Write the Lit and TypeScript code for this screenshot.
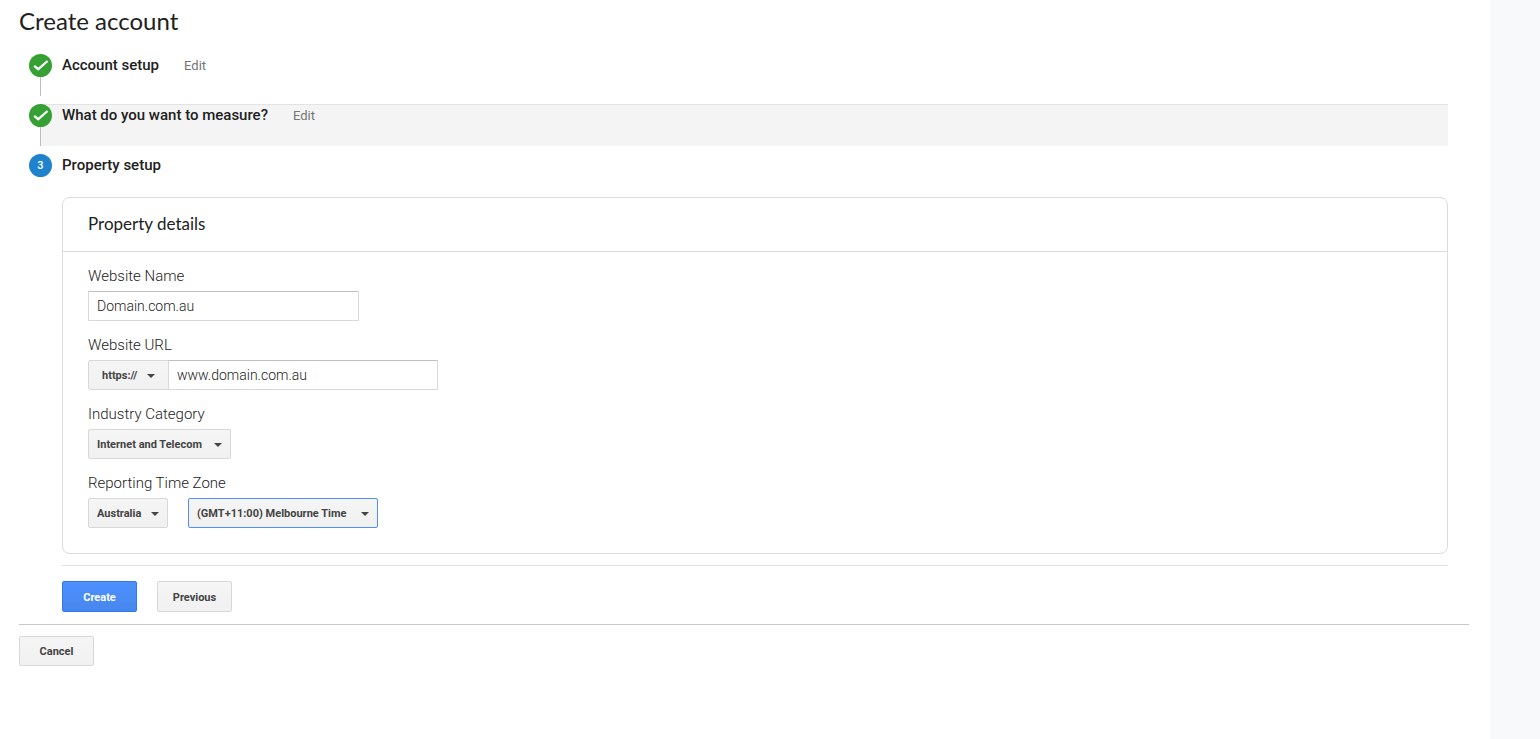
import { LitElement, html, css } from "lit";
import { customElement } from "lit/decorators.js";

const check = html`<svg class="check" viewBox="0 0 23 23" aria-hidden="true">
  <path d="M5.2 11.8 L9.2 15.2 L18.6 7" fill="none" stroke="#fff" stroke-width="2.2" />
</svg>`;

@customElement("app-root")
export class AppRoot extends LitElement {
  static styles = css`
    :host {
      display: grid;
      grid-template-columns: minmax(0, 1fr) 50px;
      min-height: 100vh;
      background: #fff;
      color: #212121;
      font-family: Roboto, "Liberation Sans", sans-serif;
      font-size: 15px;
      line-height: 20px;
    }
    * {
      box-sizing: border-box;
    }
    .gutter {
      background: #f8f9fb;
    }
    .page {
      padding: 5px 21px 20px 19px;
    }
    .title {
      margin: 0 0 17px;
      font-family: "Google Sans", Lato, sans-serif;
      font-size: 24px;
      font-weight: 400;
      line-height: 32px;
    }
    .steps {
      margin: 0;
      padding: 0 21px;
      list-style: none;
    }
    .step {
      display: flex;
      align-items: flex-start;
      height: 42px;
      margin-bottom: 8px;
      border-left: 1px solid #bdbdbd;
    }
    .step.shaded {
      background: linear-gradient(#e3e3e3 1px, #f4f4f4 1px);
    }
    .step.current {
      height: auto;
      margin-bottom: 20px;
      border-left-color: transparent;
    }
    .marker {
      width: 23px;
      height: 23px;
      margin: 0 10px 0 -12px;
      border-radius: 50%;
      background: #35a135;
      color: #fff;
      font-size: 11px;
      font-weight: 500;
      line-height: 24px;
      text-align: center;
    }
    .current .marker {
      background: #1e82cd;
    }
    .check {
      display: block;
      width: 23px;
      height: 23px;
    }
    .name {
      margin: 0;
      font-size: 15px;
      font-weight: 500;
      line-height: 22px;
    }
    .edit {
      margin-left: 25px;
      color: #757575;
      font-size: 13px;
      line-height: 23px;
      text-decoration: none;
    }
    .setup {
      margin: 0 21px 12px 43px;
    }
    .panel {
      border: 1px solid #dadce0;
      border-radius: 8px;
    }
    .panel-title {
      margin: 0;
      padding: 16px 25px 17px;
      border-bottom: 1px solid #dadce0;
      font-family: "Google Sans", Lato, sans-serif;
      font-size: 17px;
      font-weight: 400;
      line-height: 20px;
    }
    .fields {
      display: grid;
      gap: 14px;
      padding: 14px 25px 25px;
    }
    .field {
      display: grid;
      gap: 5px;
      justify-items: start;
      color: #222;
      font-weight: 350;
    }
    .row {
      display: flex;
    }
    .row.spaced {
      gap: 20px;
    }
    .text {
      width: 271px;
      height: 30px;
      padding: 0 8px;
      border: 1px solid #d9d9d9;
      border-top-color: #c0c0c0;
      border-radius: 1px;
      outline: 0;
      background: #fff;
      color: #222;
      font: 350 14px Roboto, "Liberation Sans", sans-serif;
    }
    .row .text {
      width: 270px;
      margin-left: -1px;
    }
    .pick,
    .button {
      height: 30px;
      border: 1px solid #d8d8d8;
      border-radius: 2px;
      background: linear-gradient(#f5f5f5, #f1f1f1);
      color: #444;
      font: bold 11px Roboto, "Liberation Sans", sans-serif;
    }
    .pick {
      appearance: none;
      min-width: 80px;
      padding: 0 24px 0 8px;
      outline: 0;
      background:
        url("data:image/svg+xml,%3Csvg xmlns='http://www.w3.org/2000/svg' width='8' height='4'%3E%3Cpath d='M0 0h8L4 4z' fill='%23444'/%3E%3C/svg%3E")
          right 8px top 13px no-repeat,
        linear-gradient(#f5f5f5, #f1f1f1);
    }
    .pick.scheme {
      min-width: 81px;
      padding: 0 29px 0 13px;
      border-radius: 2px 0 0 2px;
      background-position: right 13px top 13px, 0 0;
    }
    .pick.industry {
      min-width: 143px;
    }
    .pick.zone {
      min-width: 190px;
      border-color: #4d90fe;
    }
    .actions {
      display: flex;
      gap: 20px;
      margin-top: 11px;
      padding-top: 15px;
      border-top: 1px solid #e0e0e0;
    }
    .button {
      min-width: 75px;
      padding: 0 8px;
    }
    .actions .button {
      height: 31px;
      padding-top: 1px;
    }
    .button.primary {
      border-color: #3079ed;
      background: linear-gradient(#4d90fe, #4787ed);
      color: #fff;
    }
    .footer {
      padding-top: 11px;
      border-top: 1px solid #c8c8c8;
    }
  `;

  render() {
    return html`
      <main class="page">
        <h1 class="title">Create account</h1>
        <ol class="steps">
          <li class="step">
            <span class="marker">${check}</span>
            <h2 class="name">Account setup</h2>
            <a class="edit" href="#account">Edit</a>
          </li>
          <li class="step shaded">
            <span class="marker">${check}</span>
            <h2 class="name">What do you want to measure?</h2>
            <a class="edit" href="#measure">Edit</a>
          </li>
          <li class="step current">
            <span class="marker">3</span>
            <h2 class="name">Property setup</h2>
          </li>
        </ol>
        <form class="setup" @submit=${(e: Event) => e.preventDefault()}>
          <section class="panel">
            <h3 class="panel-title">Property details</h3>
            <div class="fields">
              <div class="field">
                <label for="site-name">Website Name</label>
                <input id="site-name" class="text" type="text" value="Domain.com.au" />
              </div>
              <div class="field">
                <label for="site-url">Website URL</label>
                <div class="row">
                  <select class="pick scheme" aria-label="Scheme">
                    <option>https://</option>
                    <option>http://</option>
                  </select>
                  <input id="site-url" class="text" type="text" value="www.domain.com.au" />
                </div>
              </div>
              <div class="field">
                <label for="industry">Industry Category</label>
                <select id="industry" class="pick industry">
                  <option>Internet and Telecom</option>
                </select>
              </div>
              <div class="field">
                <label for="country">Reporting Time Zone</label>
                <div class="row spaced">
                  <select id="country" class="pick">
                    <option>Australia</option>
                  </select>
                  <select class="pick zone" aria-label="Time zone">
                    <option>(GMT+11:00) Melbourne Time</option>
                  </select>
                </div>
              </div>
            </div>
          </section>
          <div class="actions">
            <button class="button primary" type="submit">Create</button>
            <button class="button" type="button">Previous</button>
          </div>
        </form>
        <div class="footer">
          <button class="button" type="button">Cancel</button>
        </div>
      </main>
      <aside class="gutter"></aside>
    `;
  }
}
